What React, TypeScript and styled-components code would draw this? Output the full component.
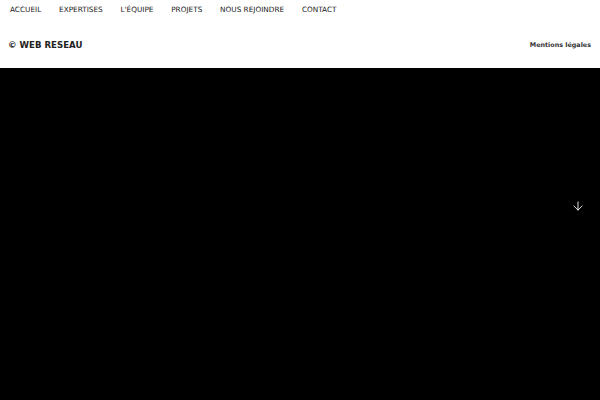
import React from 'react';
import styled, { createGlobalStyle } from 'styled-components';
import { ArrowDown } from 'lucide-react';

const GlobalStyle = createGlobalStyle`
    html, body {
        margin: 0;
        padding: 0;
        background: #fff;
        font-family: "DejaVu Sans", Verdana, sans-serif;
    }
    #root {
        height: 100vh;
        display: flex;
        flex-direction: column;
    }
`;

const Header = styled.header`
    height: 68px;
    background: #fff;
    display: flex;
    flex-direction: column;
    flex-shrink: 0;
`;

const Nav = styled.nav`
    display: flex;
    gap: 17.8px;
    padding: 2px 10px 0;
    height: 14px;
    align-items: center;
`;

const NavLink = styled.a`
    font-size: 7.3px;
    color: #222;
    text-transform: uppercase;
    text-decoration: none;
`;

const Bar = styled.div`
    flex: 1;
    display: flex;
    align-items: center;
    justify-content: space-between;
    padding: 6px 9px 0 8px;
`;

const Brand = styled.div`
    font-size: 8.6px;
    font-weight: bold;
    color: #222;
`;

const Legal = styled.a`
    font-size: 6.4px;
    font-weight: bold;
    color: #333;
    text-decoration: none;
`;

const Hero = styled.section`
    flex: 1;
    background: #000;
    position: relative;
`;

const ScrollDown = styled.span`
    position: absolute;
    top: 131px;
    right: 15px;
    color: #fff;
    display: flex;
`;

const links = ['Accueil', 'Expertises', "L'équipe", 'Projets', 'Nous rejoindre', 'Contact'];

const App = () => {
    return (
        <>
            <GlobalStyle />
            <Header>
                <Nav>
                    {links.map((l) => <NavLink key={l} href="#">{l}</NavLink>)}
                </Nav>
                <Bar>
                    <Brand>© WEB RESEAU</Brand>
                    <Legal href="#">Mentions légales</Legal>
                </Bar>
            </Header>
            <Hero>
                <ScrollDown>
                    <ArrowDown size={14} strokeWidth={1.5} />
                </ScrollDown>
            </Hero>
        </>
    );
};

export default App;
